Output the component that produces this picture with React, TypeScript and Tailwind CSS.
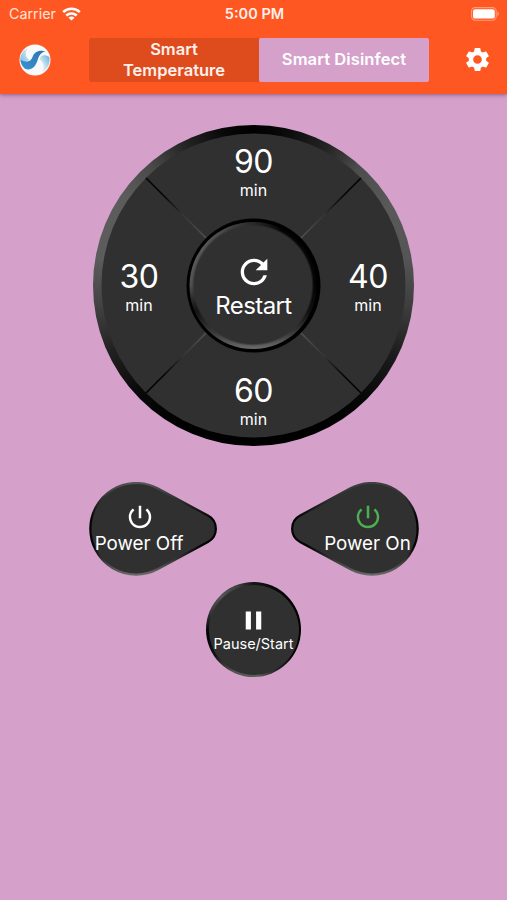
import React from "react";
import { MdPause, MdPowerSettingsNew, MdRefresh, MdSettings } from "react-icons/md";

function WifiIcon() {
  return (
    <svg width="19" height="14" viewBox="0 0 19 14" fill="none" stroke="white" strokeWidth="2.5">
      <path d="M1.2 5.2a12 12 0 0 1 16.6 0" />
      <path d="M4.3 8.500a7.600 7.600 0 0 1 10.400 0" />
      <path d="M9.500 13.600 6.500 10.700a4.200 4.200 0 0 1 6 0z" fill="white" stroke="none" />
    </svg>
  );
}

function BatteryIcon() {
  return (
    <svg width="29" height="14" viewBox="0 0 29 14">
      <rect x="0.6" y="0.6" width="24.6" height="12.6" rx="3.6" fill="none" stroke="#ff9a7a" strokeWidth="1.1" />
      <rect x="2" y="2.2" width="21.8" height="9.4" rx="2.2" fill="white" />
      <path d="M26.4 4.6c1.9.7 1.9 3.9 0 4.6z" fill="#ff9a7a" />
    </svg>
  );
}

function Logo() {
  return (
    <svg width="32" height="32" viewBox="0 0 32 32">
      <defs>
        <linearGradient id="wave" x1="0" y1="1" x2="1" y2="0">
          <stop offset="0" stopColor="#3a93d3" />
          <stop offset="1" stopColor="#2c74b0" />
        </linearGradient>
        <linearGradient id="mist" x1="0" y1="1" x2="1" y2="0">
          <stop offset="0" stopColor="#edf5f9" />
          <stop offset="0.45" stopColor="#c9e2f0" />
          <stop offset="1" stopColor="#62afdb" />
        </linearGradient>
        <linearGradient id="crest" x1="0" y1="1" x2="1" y2="0">
          <stop offset="0" stopColor="#7fbfe2" />
          <stop offset="1" stopColor="#e4f0f6" />
        </linearGradient>
      </defs>
      <circle cx="16" cy="16" r="15.500" fill="#f7fafb" />
      <path d="M1 15C2 9 4.600 6 8.500 4C5.500 9 6.500 13.500 10.500 16C7 18 3.500 17.500 1 15Z" fill="url(#crest)" />
      <path d="M1.200 15.500C6 18.500 11.800 18.500 13.500 13C15 8.200 19.500 5.500 26.500 7.200C22 8.500 20.300 11 18.800 15.500C16.500 23.800 11.500 27 6 24.800C3 22.500 1.600 19 1.200 15.500Z" fill="url(#wave)" />
      <path d="M20.500 15.500C21.200 11.300 26 10 30.400 13C31.300 20 28.500 25.500 23.500 28C26 22.500 24.500 18 20.500 15.500Z" fill="url(#mist)" />
    </svg>
  );
}

function Minutes({ value }: { value: string }) {
  return (
    <button className="flex w-full flex-col items-center text-white">
      <span className="text-[32px] leading-[36px] tracking-[-0.5px]">{value}</span>
      <span className="text-[16px] leading-5">min</span>
    </button>
  );
}

function Dial() {
  return (
    <div className="relative h-[321px] w-[321px] rounded-full bg-[conic-gradient(#000_0deg,#080808_10deg,#242424_28deg,#4d4d4d_42deg,#595959_60deg,#555_80deg,#3d3d3d_98deg,#1c1c1c_116deg,#080808_135deg,#000_150deg,#000_210deg,#0a0a0a_228deg,#222_246deg,#454545_264deg,#5c5c5c_280deg,#5c5c5c_305deg,#484848_320deg,#222_335deg,#070707_350deg,#000_360deg)]">
      <svg className="absolute inset-0" width="321" height="321" viewBox="0 0 321 321">
        <defs>
          <radialGradient id="groove" gradientUnits="userSpaceOnUse" cx="160.500" cy="160.500" r="152">
            <stop offset="0.44" stopColor="#505050" />
            <stop offset="0.66" stopColor="#353535" />
            <stop offset="0.7" stopColor="#252525" />
            <stop offset="0.83" stopColor="#050505" />
            <stop offset="1" stopColor="#000" />
          </radialGradient>
          <linearGradient id="hub" x1="0.1" y1="0.15" x2="0.82" y2="0.5">
            <stop offset="0" stopColor="#5c5c5c" />
            <stop offset="0.25" stopColor="#383838" />
            <stop offset="0.65" stopColor="#050505" />
          </linearGradient>
          <linearGradient id="hubLow" x1="0" y1="0" x2="0" y2="1">
            <stop offset="0.5" stopColor="#101010" stopOpacity="0" />
            <stop offset="0.7" stopColor="#101010" stopOpacity="0.9" />
            <stop offset="0.88" stopColor="#3c3c3c" />
            <stop offset="1" stopColor="#6a6a6a" />
          </linearGradient>
          <radialGradient id="hubFace">
            <stop offset="0.96" stopColor="#303030" />
            <stop offset="1" stopColor="#303030" stopOpacity="0" />
          </radialGradient>
        </defs>
        <circle cx="160.500" cy="160.500" r="152" fill="#303030" />
        <path d="M53 53 268 268M268 53 53 268" stroke="url(#groove)" strokeWidth="1.600" />
        <circle cx="160.500" cy="160.500" r="67" fill="#000" />
        <circle cx="160" cy="160.500" r="63.500" fill="url(#hub)" />
        <circle cx="160" cy="160.500" r="63.500" fill="url(#hubLow)" />
        <circle cx="160" cy="160" r="61" fill="url(#hubFace)" />
      </svg>
      <div className="relative grid h-full grid-cols-[92px_137px_92px] grid-rows-[92px_137px_92px] place-items-center pr-[1px]">
        <div className="col-start-2 pt-[2px]"><Minutes value="90" /></div>
        <div className="col-start-1 row-start-2 pt-[2px]"><Minutes value="30" /></div>
        <button className="col-start-2 row-start-2 flex flex-col items-center pt-[1px] text-white">
          <MdRefresh className="ml-[2px]" size={40} />
          <span className="text-[24px] leading-7 tracking-[-0.6px]">Restart</span>
        </button>
        <div className="col-start-3 row-start-2 pt-[2px]"><Minutes value="40" /></div>
        <div className="col-start-2 row-start-3 pt-[2px]"><Minutes value="60" /></div>
      </div>
    </div>
  );
}

function PowerButton({ on }: { on?: boolean }) {
  return (
    <button className="relative h-[94px] w-[128px] text-white">
      <svg className={on ? "absolute inset-0 -scale-x-100" : "absolute inset-0"} width="128" height="94" viewBox="0 0 128 94">
        <defs>
          <linearGradient id={on ? "rimOn" : "rimOff"} x1="0" y1="0" x2="0" y2="1">
            <stop offset="0" stopColor={on ? "#404040" : "#555"} />
            <stop offset="0.22" stopColor="#282828" />
            <stop offset="0.4" stopColor="#000" />
            <stop offset="0.68" stopColor="#000" />
            <stop offset="0.85" stopColor="#3a3a3a" />
            <stop offset="1" stopColor="#686868" />
          </linearGradient>
        </defs>
        <path
          d="M68.500 6.300 118.900 33.500A15 15 0 0 1 118.900 60L68.500 87.300A45.800 45.800 0 1 1 68.500 6.300Z"
          fill="#303030"
          stroke={on ? "url(#rimOn)" : "url(#rimOff)"}
          strokeWidth="2.200"
        />
      </svg>
      <span className={on ? "relative flex flex-col items-center pl-[25px]" : "relative flex flex-col items-center pr-[28px]"}>
        <MdPowerSettingsNew className={on ? "" : "ml-[1px]"} size={30} color={on ? "#4caf50" : "white"} />
        <span className="whitespace-nowrap text-[18.800px] leading-6">{on ? "Power On" : "Power Off"}</span>
      </span>
    </button>
  );
}

export default function App() {
  return (
    <div className="flex h-[900px] w-[507px] flex-col overflow-hidden bg-[#d5a1cb] font-['Inter',sans-serif]">
      <header className="relative h-[94px] shrink-0 bg-[#ff5722] text-white shadow-[0_1px_4px_rgba(70,30,70,0.5)]">
        <div className="grid h-[27px] grid-cols-3 items-center pl-[9px] pr-[7px]">
          <div className="flex items-center gap-[6px] text-[14.300px] text-[#ffe3da]">
            <span>Carrier</span>
            <WifiIcon />
          </div>
          <span className="text-center text-[14.500px] font-semibold text-[#fff0eb]">5:00 PM</span>
          <div className="flex justify-end"><BatteryIcon /></div>
        </div>
        <div className="mt-[1px] flex h-[63px] items-center pl-[19px] pr-[15px]">
          <Logo />
          <div className="ml-[38px] grid h-[44px] w-[340px] grid-cols-2 text-[16.500px] font-semibold leading-[21px]">
            <button className="flex items-center justify-center rounded-l-[3px] bg-[#de4c1e] px-6 text-[#fff0eb]">Smart Temperature</button>
            <button className="flex items-center justify-center rounded-[2px] bg-[#d5a1cb] tracking-[0.1px]">Smart Disinfect</button>
          </div>
          <MdSettings className="ml-auto" size={29} />
        </div>
      </header>
      <main className="flex flex-col items-center pt-[31px]">
        <Dial />
        <div className="mt-[36px] flex w-[331px] justify-between pl-[1px]">
          <PowerButton />
          <PowerButton on />
        </div>
        <button className="mt-[6px] h-[95px] w-[95px] rounded-full bg-[conic-gradient(#151515_0deg,#000_50deg,#000_120deg,#1a1a1a_145deg,#5c5c5c_175deg,#555_205deg,#151515_235deg,#000_265deg,#333_290deg,#555_315deg,#404040_340deg,#151515_360deg)] p-[2.500px] text-white">
          <span className="flex h-full flex-col items-center justify-center rounded-full bg-[#303030] pb-[2px]">
            <MdPause size={31} />
            <span className="text-[14.500px] leading-4">Pause/Start</span>
          </span>
        </button>
      </main>
    </div>
  );
}
